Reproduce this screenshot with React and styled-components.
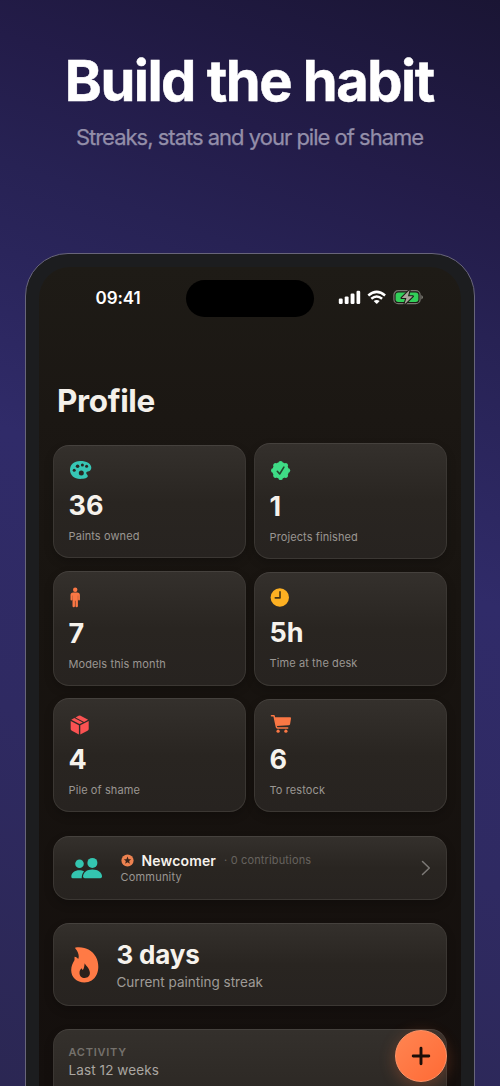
import styled, { createGlobalStyle } from "styled-components";

const stats = [
  [
    { icon: "palette", value: "36", label: "Paints owned", h: 113.5, ih: 21, gap: 13 },
    { icon: "person", value: "7", label: "Models this month", h: 115, ih: 23, gap: 12 },
    { icon: "box", value: "4", label: "Pile of shame", h: 114, ih: 22, gap: 0 },
  ],
  [
    { icon: "seal", value: "1", label: "Projects finished", h: 116, ih: 24, gap: 13 },
    { icon: "clock", value: "5h", label: "Time at the desk", h: 113.5, ih: 21, gap: 13 },
    { icon: "cart", value: "6", label: "To restock", h: 113.5, ih: 21.5, gap: 0 },
  ],
];

const hole = "#2a2622";

const StatIcon = ({ name }) => {
  switch (name) {
    case "palette":
      return (
        <svg width="23" height="20" viewBox="0 0 23 20">
          <path
            fill="#37c6b5"
            d="M11.2 1C4.9 1 1 4.800 1 9.800C1 15.200 5.200 19 11.200 19C15.600 19 18.800 17.900 18.800 16.100C18.800 14.500 17.200 14.200 17.200 12.900C17.200 11.700 18.500 11.700 19.900 11.300C21.500 10.800 22.300 9.400 22.300 7.600C22.300 3.600 17.600 1 11.200 1Z"
          />
          <g fill={hole}>
            <circle cx="5.200" cy="10.300" r="1.500" />
            <circle cx="8.600" cy="6.300" r="1.800" />
            <circle cx="13.400" cy="4.900" r="1.500" />
            <circle cx="17.600" cy="6.300" r="1.500" />
            <circle cx="12.300" cy="13.100" r="2.500" />
          </g>
        </svg>
      );
    case "seal":
      return (
        <svg width="22" height="21" viewBox="0 0 22 21">
          <g transform="translate(10.600 10.500)">
            <g fill="#3fdc86">
              <circle r="8.300" />
              {[0, 45, 90, 135, 180, 225, 270, 315].map((a) => (
                <circle key={a} cx="0" cy="-7.400" r="2.200" transform={`rotate(${a})`} />
              ))}
            </g>
            <path
              d="M-3.300 .8L-.9 3.500L3.300 -3.300"
              fill="none"
              stroke="#20472e"
              strokeWidth="1.600"
              strokeLinecap="round"
              strokeLinejoin="round"
            />
          </g>
        </svg>
      );
    case "person":
      return (
        <svg width="14" height="21" viewBox="0 0 14 21">
          <g fill="#fb7744">
            <circle cx="6.200" cy="2.700" r="2.200" />
            <path d="M4.200 5.400H8.200Q10.900 5.400 10.900 7.900V12.600Q10.900 13.500 10 13.500Q9.200 13.500 9.100 12.600V8.500H8.900V19Q8.900 20.200 7.700 20.200Q6.450 20.200 6.450 19V13.800H5.950V19Q5.950 20.200 4.700 20.200Q3.500 20.200 3.500 19V8.500H3.300V12.600Q3.200 13.500 2.400 13.500Q1.500 13.500 1.500 12.600V7.900Q1.500 5.400 4.200 5.400Z" />
          </g>
        </svg>
      );
    case "clock":
      return (
        <svg width="21" height="21" viewBox="0 0 21 21">
          <circle cx="9.800" cy="10.500" r="9.200" fill="#fdb022" />
          <path
            d="M10 4.900V10.900H5.300"
            fill="none"
            stroke="#453415"
            strokeWidth="1.600"
            strokeLinecap="round"
            strokeLinejoin="round"
          />
        </svg>
      );
    case "box":
      return (
        <svg width="21" height="21" viewBox="0 0 21 21">
          <g fill="#fa5252">
            <path d="M1.700 7L9.900 11.200V20.400L2.900 16.700Q1.700 16.100 1.700 14.900Z" />
            <path d="M19.700 7L11.300 11.200V20.400L18.500 16.700Q19.700 16.100 19.700 14.900Z" />
            <path d="M2.300 5.700L5.300 4.100L13.900 8.500L10.600 10.100Z" />
            <path d="M6.500 3.500L9.600 1.800Q10.600 1.300 11.600 1.800L19.100 5.700L15.100 7.900Z" />
          </g>
        </svg>
      );
    default:
      return (
        <svg width="23" height="20" viewBox="0 0 23 20">
          <g fill="#fb7744">
            <path d="M4.500 3.300H20.100Q21.200 3.300 21 4.400L20.100 9.900Q19.900 11.200 18.500 11.300L6.400 12Z" />
            <circle cx="8.100" cy="17.200" r="1.600" />
            <circle cx="15.900" cy="17.200" r="1.600" />
          </g>
          <path
            d="M1.500 1.700H4L6.400 12.900Q6.600 14 7.600 14H17.700"
            fill="none"
            stroke="#fb7744"
            strokeWidth="1.500"
            strokeLinecap="round"
            strokeLinejoin="round"
          />
        </svg>
      );
  }
};

const App = () => {
  return (
    <Page>
      <GlobalStyle />
      <Title>Build the habit</Title>
      <Subtitle>Streaks, stats and your pile of shame</Subtitle>
      <Phone>
        <Screen>
          <StatusBar>
            <Time>09:41</Time>
            <Island />
            <StatusIcons />
          </StatusBar>
          <Heading>Profile</Heading>
          <StatColumns>
            {stats.map((column, index) => {
              return (
                <StatColumn key={index} $top={index === 0 ? 1.5 : 0}>
                  {column.map((stat) => (
                    <StatCard key={stat.label} $height={stat.h} $gap={stat.gap}>
                      <IconBox $height={stat.ih}>
                        <StatIcon name={stat.icon} />
                      </IconBox>
                      <StatValue>{stat.value}</StatValue>
                      <StatLabel>{stat.label}</StatLabel>
                    </StatCard>
                  ))}
                </StatColumn>
              );
            })}
          </StatColumns>
          <CommunityCard>
            <svg width="33" height="23" viewBox="0 0 33 23">
              <g fill="#34c5b0">
                <circle cx="9.500" cy="6.800" r="4.300" />
                <circle cx="22.400" cy="5.900" r="5" />
                <path d="M1.300 19.400C1.300 15.800 4.800 13.200 9.300 13.200C11.200 13.200 12.900 13.600 14.100 14.400C12.400 16 11.700 18.200 11.700 21.300H2.900Q1.300 21.300 1.300 19.400Z" />
                <path d="M13.100 19.600C13.100 15.300 17 12.500 22.400 12.500C27.800 12.500 32 15.300 32 19.600Q32 21.300 30.300 21.300H14.800Q13.100 21.300 13.100 19.600Z" />
              </g>
            </svg>
            <CommunityText>
              <RankLine>
                <svg width="13" height="13" viewBox="0 0 13 13">
                  <circle cx="6.500" cy="6.500" r="6.100" fill="#ed8250" />
                  <path
                    fill="#38251b"
                    d="M6.500 2.600L7.550 5.150L10.200 5.300L8.150 7L8.850 9.700L6.500 8.250L4.150 9.700L4.850 7L2.800 5.300L5.450 5.150Z"
                  />
                </svg>
                <Rank>Newcomer</Rank>
                <Contributions>· 0 contributions</Contributions>
              </RankLine>
              <CommunityLabel>Community</CommunityLabel>
            </CommunityText>
            <svg width="10" height="16" viewBox="0 0 10 16">
              <path
                d="M1.500 1.500L8.300 8L1.500 14.500"
                fill="none"
                stroke="#7d7a77"
                strokeWidth="1.500"
                strokeLinecap="round"
                strokeLinejoin="round"
              />
            </svg>
          </CommunityCard>
          <StreakCard>
            <svg width="29" height="38" viewBox="0 0 29 38">
              <path
                fill="#ff7a45"
                d="M5.600 1.500C14.500 .2 22.200 4.200 25.800 10.700C28.700 16 29.200 23.200 26.700 28.600C24.300 33.900 19.800 36.500 14.400 36.500C6.900 36.500 1.200 31.400 1.200 24.300C1.200 20 2.800 17.300 4.300 14.500C4.800 13.500 4.300 12.200 4.600 10.800C6 11.100 7.500 12 8.200 13C9.500 10.300 8.400 5.600 5.500 2.700C5 2.200 5 1.600 5.600 1.500Z"
              />
              <path
                fill="#2a211b"
                d="M14.700 17.200C15.300 19.200 19.900 22.300 19.900 26.700C19.900 29.900 17.800 31.900 14.700 31.900C11.700 31.900 9.500 29.900 9.500 26.900C9.500 24.700 10.300 23.500 11.500 22.300C11.800 23.200 12.200 23.600 12.700 24C14.200 22.400 14.200 19.800 14.700 17.200Z"
              />
            </svg>
            <StreakText>
              <StreakValue>3 days</StreakValue>
              <StreakLabel>Current painting streak</StreakLabel>
            </StreakText>
          </StreakCard>
          <ActivityCard>
            <ActivityTitle>ACTIVITY</ActivityTitle>
            <ActivityRange>Last 12 weeks</ActivityRange>
            <AddButton aria-label="Add">
              <svg width="20" height="20" viewBox="0 0 20 20">
                <path
                  d="M10 2.200V17.800M2.200 10H17.800"
                  stroke="#1c0e08"
                  strokeWidth="2.900"
                  strokeLinecap="round"
                />
              </svg>
            </AddButton>
          </ActivityCard>
        </Screen>
      </Phone>
    </Page>
  );
};

//상태바 아이콘
const StatusIcons = () => (
  <svg width="86" height="16" viewBox="0 0 86 16">
    <g fill="#fff">
      <rect x="0.800" y="9.600" width="3.900" height="5.400" rx="1.200" />
      <rect x="6.700" y="7.400" width="3.900" height="7.600" rx="1.200" />
      <rect x="12.600" y="4.600" width="3.900" height="10.400" rx="1.200" />
      <rect x="18.500" y="1.800" width="3.700" height="13.200" rx="1.200" />
    </g>
    <g fill="none" stroke="#fff" strokeWidth="2.500">
      <path d="M30.300 6.500Q38.700 -.7 47.100 6.500" />
      <path d="M33.300 9.800Q38.700 5.300 44.100 9.800" />
    </g>
    <path fill="#fff" d="M35.700 12.100Q38.700 9.700 41.700 12.100L39.300 14.600Q38.700 15.100 38.100 14.600Z" />
    <rect x="55.900" y="1.700" width="26.200" height="13" rx="4.300" fill="none" stroke="#77766f" strokeWidth="1.200" />
    <path fill="#77766f" d="M83.300 6Q85 6.800 85 8.300Q85 9.800 83.300 10.600Z" />
    <rect x="57.600" y="3.500" width="22.800" height="9.400" rx="2.700" fill="#32cf59" />
    <path
      d="M71.600 .9L63.600 9H68.400L66.400 15.600L74.800 7.300H70Z"
      fill="#aaa59c"
      stroke="#1e1c17"
      strokeWidth="2.200"
      paintOrder="stroke"
      strokeLinejoin="round"
    />
  </svg>
);

export default App;

const GlobalStyle = createGlobalStyle`
  * {
    box-sizing: border-box;
  }

  body {
    margin: 0;
    overflow: hidden;
    font-family: Inter, "Liberation Sans", sans-serif;
  }

  svg {
    display: block;
    flex: none;
  }
`;

const Page = styled.main`
  width: 500px;
  height: 1086px;
  overflow: hidden;
  display: flex;
  flex-direction: column;
  align-items: center;
  background: linear-gradient(
    200deg,
    #1a1534 0%,
    #231c49 17%,
    #272254 27%,
    #302b69 48%,
    #2f2a62 70%,
    #2b2753 100%
  );
`;

const Title = styled.h1`
  margin: 47px 0 0;
  padding-right: 1.5px;
  font-size: 56px;
  line-height: 68px;
  font-weight: 700;
  letter-spacing: -1.5px;
  color: #fff;
  white-space: nowrap;
  -webkit-text-stroke: 0.5px #fff;
`;

const Subtitle = styled.p`
  margin: 8px 0 0;
  padding-right: 1px;
  font-size: 22px;
  line-height: 28px;
  letter-spacing: -1px;
  color: #938ea9;
  white-space: nowrap;
  -webkit-text-stroke: 0.25px #938ea9;
`;

const Phone = styled.section`
  flex: none;
  width: 450px;
  height: 900px;
  margin-top: 102px;
  padding: 13px;
  border: 1px solid #68657a;
  border-radius: 43px;
  background: #1c1d1f;
`;

const Screen = styled.div`
  height: 100%;
  padding: 0 14px;
  border-radius: 31px;
  background: linear-gradient(#1e1b16 0, #1b1713 150px, #181410 330px, #140f0d 820px);
`;

const StatusBar = styled.header`
  display: flex;
  align-items: center;
  height: 60px;
  padding-left: 42.5px;
`;

const Time = styled.span`
  width: 90px;
  padding-top: 1px;
  font-size: 17px;
  font-weight: 600;
  letter-spacing: -0.05px;
  color: #fff;
`;

const Island = styled.div`
  width: 128px;
  height: 37px;
  margin: 3px 24px 0 0;
  border-radius: 19px;
  background: #000;
`;

const Heading = styled.h2`
  margin: 54px 0 0 4px;
  font-size: 31.5px;
  line-height: 40px;
  font-weight: 700;
  letter-spacing: -0.35px;
  color: #f4f0ea;
`;

const StatColumns = styled.div`
  display: flex;
  gap: 8px;
  height: 393px;
  margin-top: 22px;
`;

const StatColumn = styled.div`
  width: 193px;
  padding-top: ${(props) => props.$top}px;
`;

const Card = styled.div`
  border: 1px solid #3b3733;
  border-top-color: #45413d;
  border-radius: 16px;
  background: linear-gradient(#34302c, #292521 50%, #272320);
  box-shadow: 0 4px 10px rgba(0, 0, 0, 0.2);
`;

const StatCard = styled(Card)`
  height: ${(props) => props.$height}px;
  margin-bottom: ${(props) => props.$gap}px;
  padding: 14px 15px 0 14.5px;
`;

const IconBox = styled.div`
  display: flex;
  align-items: center;
  height: ${(props) => props.$height}px;
`;

const StatValue = styled.div`
  margin-top: 8px;
  font-size: 27px;
  line-height: 34px;
  font-weight: 700;
  color: #f6f2ec;
`;

const StatLabel = styled.div`
  margin-top: 6px;
  font-size: 11px;
  line-height: 14px;
  letter-spacing: 0.1px;
  color: #9a9692;
`;

const CommunityCard = styled(Card)`
  display: flex;
  align-items: center;
  height: 64px;
  padding: 0 15px 0 16px;
`;

const CommunityText = styled.div`
  flex: 1;
  padding: 1px 0 0 17.5px;
`;

const RankLine = styled.div`
  display: flex;
  align-items: center;
  height: 18px;
`;

const Rank = styled.span`
  margin-left: 8px;
  font-size: 14px;
  font-weight: 600;
  letter-spacing: 0.15px;
  color: #f6f2ec;
`;

const Contributions = styled.span`
  margin-left: 8px;
  font-size: 11px;
  letter-spacing: 0.15px;
  color: #67635f;
`;

const CommunityLabel = styled.div`
  font-size: 11px;
  line-height: 17px;
  letter-spacing: 0.2px;
  color: #9a9692;
`;

const StreakCard = styled(Card)`
  display: flex;
  align-items: center;
  gap: 17.5px;
  height: 83px;
  margin-top: 23px;
  padding: 0 16px;
`;

const StreakText = styled.div`
  padding-top: 2px;
`;

const StreakValue = styled.div`
  font-size: 26px;
  line-height: 32px;
  font-weight: 700;
  letter-spacing: -0.2px;
  color: #f6f2ec;
`;

const StreakLabel = styled.div`
  font-size: 13.5px;
  line-height: 22px;
  color: #9f9b97;
`;

const ActivityCard = styled(Card)`
  position: relative;
  height: 180px;
  margin-top: 23px;
  padding: 14px 15px 0 14.5px;
`;

const ActivityTitle = styled.div`
  font-size: 11px;
  line-height: 16px;
  font-weight: 600;
  letter-spacing: 0.75px;
  color: #75716c;
`;

const ActivityRange = styled.div`
  font-size: 13.5px;
  line-height: 20px;
  letter-spacing: 0.1px;
  color: #aaa6a1;
`;

/* 카드 위에 떠 있는 추가 버튼 */
const AddButton = styled.button`
  position: absolute;
  top: 0;
  right: -1px;
  display: flex;
  align-items: center;
  justify-content: center;
  width: 52px;
  height: 52px;
  padding: 0;
  border: 1px solid #ff9367;
  border-radius: 50%;
  background: linear-gradient(135deg, #ff8552, #ff6a35);
  box-shadow: 0 4px 16px rgba(255, 115, 60, 0.28);
`;
